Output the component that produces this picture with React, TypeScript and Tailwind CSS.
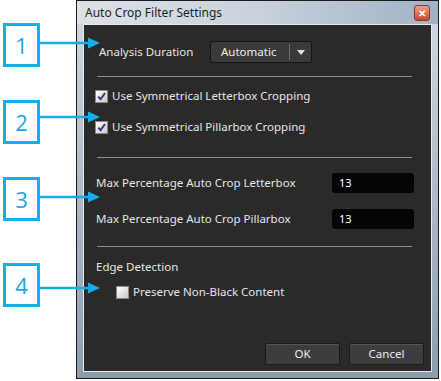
import { ReactNode } from 'react'

const font = { fontFamily: '"Noto Sans", "Open Sans", sans-serif' }

function Check({ checked }: { checked: boolean }) {
  return (
    <span className="flex h-[13px] w-[13px] items-center justify-center border border-[#8a8a8a] bg-gradient-to-br from-[#ffffff] to-[#c9c9c9]">
      {checked && (
        <svg viewBox="0 0 12 12" className="h-[11px] w-[11px]">
          <path d="M2.5 6.2 L5 9 L9.8 2.2" fill="none" stroke="#2b3a8c" strokeWidth="2.2" />
        </svg>
      )}
    </span>
  )
}

function Sep({ mt }: { mt: string }) {
  return <div className={`${mt} ml-[13px] mr-[19px] h-px bg-[#8c8c8c]`} />
}

function Field({ label, value, mt }: { label: string; value: string; mt: string }) {
  return (
    <div className={`${mt} flex h-[20px] items-center pl-[12px] pr-[17px]`}>
      <span className="flex-1 text-[11.5px] text-[#e6e6e6]">{label}</span>
      <span className="flex h-[20px] w-[82px] items-center rounded-[3px] bg-[#050505] pl-[7px] text-[11px] text-white">
        {value}
      </span>
    </div>
  )
}

function Btn({ children }: { children: ReactNode }) {
  return (
    <button className="flex h-[22px] w-[75px] items-center justify-center rounded-[2px] border border-[#1a1a1a] bg-[#3d3d3d] text-[11.5px] text-[#ececec] shadow-[inset_0_1px_0_#555]">
      {children}
    </button>
  )
}

const callouts = [
  { n: '1', top: 23, ay: 43 },
  { n: '2', top: 100, ay: 117 },
  { n: '3', top: 177, ay: 197 },
  { n: '4', top: 263, ay: 288 },
]

export default function App() {
  return (
    <div className="relative h-[381px] w-[441px] overflow-hidden bg-white" style={font}>
      <div className="ml-[76px] flex h-[379px] w-[363px] flex-col border border-[#1b1b1b] bg-gradient-to-b from-[#d3d9e0] to-[#8d9cad]">
        <div className="flex h-[23px] items-center bg-gradient-to-r from-[#dde1e6] via-[#c9d2dc] to-[#9fb2c6] pl-[8px] pr-[8px]">
          <span className="flex-1 text-[12px] text-[#1e1e1e]">Auto Crop Filter Settings</span>
          <span className="flex h-[16px] w-[16px] items-center justify-center rounded-[3px] border border-[#8a3a2a] bg-gradient-to-b from-[#e9a08c] to-[#c8432a] text-[10px] font-bold leading-none text-white">
            ✕
          </span>
        </div>
        <div className="mx-[6px] mb-[6px] flex flex-1 flex-col border border-[#e8ecf0] bg-[#2b2a29]">
          <div className="mt-[16px] flex h-[22px] items-center pl-[15px]">
            <span className="w-[111px] text-[11.5px] text-[#e6e6e6]">Analysis Duration</span>
            <span className="flex h-[22px] w-[102px] items-center rounded-[2px] border border-[#151515] bg-[#3a3a3a]">
              <span className="flex-1 pl-[10px] text-[11.5px] text-[#ececec]">Automatic</span>
              <span className="h-[16px] w-px bg-[#6a6a6a]" />
              <span className="flex w-[21px] justify-center">
                <svg viewBox="0 0 8 5" className="h-[5px] w-[8px]">
                  <path d="M0 0 H8 L4 5 Z" fill="#e0e0e0" />
                </svg>
              </span>
            </span>
          </div>
          <Sep mt="mt-[13px]" />
          <div className="mt-[9px] flex h-[20px] items-center gap-[4px] pl-[11px] text-[11.5px] text-[#e6e6e6]">
            <Check checked />
            <span>Use Symmetrical Letterbox Cropping</span>
          </div>
          <div className="mt-[11px] flex h-[20px] items-center gap-[4px] pl-[11px] text-[11.5px] text-[#e6e6e6]">
            <Check checked />
            <span>Use Symmetrical Pillarbox Cropping</span>
          </div>
          <Sep mt="mt-[20px]" />
          <Field mt="mt-[15px]" label="Max Percentage Auto Crop Letterbox" value="13" />
          <Field mt="mt-[16px]" label="Max Percentage Auto Crop Pillarbox" value="13" />
          <Sep mt="mt-[17px]" />
          <div className="mt-[10px] flex h-[20px] items-center pl-[12px] text-[11.5px] text-[#e6e6e6]">
            Edge Detection
          </div>
          <div className="mt-[5px] flex h-[20px] items-center gap-[4px] pl-[32px] text-[11.5px] text-[#e6e6e6]">
            <Check checked={false} />
            <span>Preserve Non-Black Content</span>
          </div>
          <div className="mt-[41px] flex justify-end gap-[9px] pr-[7px]">
            <Btn>OK</Btn>
            <Btn>Cancel</Btn>
          </div>
        </div>
      </div>

      {callouts.map((c) => (
        <div
          key={c.n}
          className="absolute left-[3px] flex h-[44px] w-[37px] items-center justify-center border-[3px] border-[#15aee9] bg-white text-[22px] text-[#1ea6e0]"
          style={{ top: c.top, fontFamily: '"Open Sans", sans-serif' }}
        >
          {c.n}
        </div>
      ))}
      <svg className="pointer-events-none absolute left-0 top-0" width="441" height="381">
        {callouts.map((c) => (
          <g key={c.n}>
            <line x1="40" y1={c.ay} x2="90" y2={c.ay} stroke="#15aee9" strokeWidth="2.5" />
            <path d={`M88 ${c.ay - 5.5} L100 ${c.ay} L88 ${c.ay + 5.5} Z`} fill="#15aee9" />
          </g>
        ))}
      </svg>
    </div>
  )
}
